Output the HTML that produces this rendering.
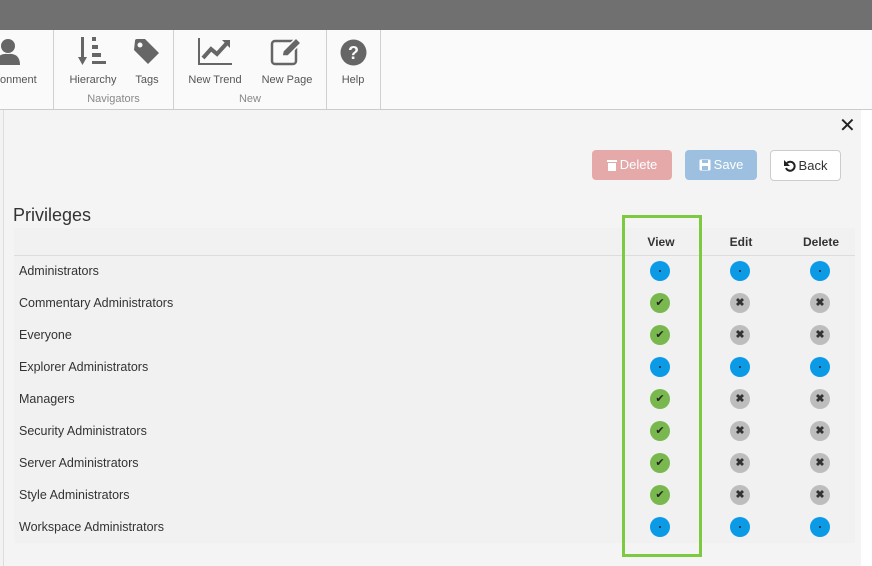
<!DOCTYPE html><html><head><style>
body{margin:0;width:872px;height:566px;overflow:hidden;background:#f3f3f3;font-family:"Liberation Sans",sans-serif;position:relative}
.top{position:absolute;left:0;top:0;width:872px;height:30px;background:#707070}
.tb{position:absolute;left:0;top:30px;width:872px;height:79px;background:#fafafa;border-bottom:1px solid #ccc}
.sep{position:absolute;top:30px;height:79px;width:1px;background:#d0d0d0}
.lbl{position:absolute;font-size:11px;color:#555;text-align:center}
.grp{position:absolute;font-size:11px;color:#888;text-align:center}
.panel{position:absolute;left:3px;top:110px;width:857px;height:456px;background:#f4f4f4;border-left:1px solid #ddd;border-right:1px solid #ddd}
.right{position:absolute;left:861px;top:110px;width:11px;height:456px;background:#fff}
.btn{position:absolute;top:150px;height:30px;border-radius:4px;font-size:13px;line-height:30px;text-align:center;color:#fff}
.btn svg{vertical-align:-2px;margin-right:3px}
h2{position:absolute;left:13px;top:205px;margin:0;font-size:18px;font-weight:normal;color:#333}
.tbl{position:absolute;left:14px;top:228px;width:841px;height:315px;background:#f1f1f1}
.hd{position:absolute;top:235px;font-size:12px;font-weight:bold;color:#333;text-align:center;width:80px}
.row{position:absolute;left:19px;font-size:12.5px;color:#333}
.ic{position:absolute;width:20px;height:20px;border-radius:50%}
.b{background:#0a9ae6}.b::after{content:"";position:absolute;left:9px;top:9px;width:2px;height:2px;background:#222;border-radius:50%}
.g{background:#78b84f;color:#222;font-size:11px;text-align:center;line-height:20px}
.x{background:#bdbdbd;color:#333;font-size:11px;text-align:center;line-height:20px;font-weight:bold}
.box{position:absolute;left:622px;top:215px;width:74px;height:336px;border:3px solid #7dc93f}
</style></head><body>
<div class="top"></div><div class="tb"></div>
<div class="sep" style="left:53px"></div><div class="sep" style="left:173px"></div><div class="sep" style="left:326px"></div><div class="sep" style="left:380px"></div>
<svg style="position:absolute;left:0;top:38px" width="20" height="28"><circle cx="8" cy="8" r="7" fill="#666"/><path d="M-4 27 Q-4 15 8 16 Q20 15 20 27Z" fill="#666"/></svg>
<div class="lbl" style="left:0;top:74px">onment</div>
<svg style="position:absolute;left:78px;top:37px" width="32" height="30" fill="#666"><rect x="3" y="0" width="3" height="22"/><path d="M0 20h9l-4.5 8z"/><rect x="14" y="0" width="4" height="4"/><rect x="14" y="8" width="6" height="4"/><rect x="14" y="16" width="9" height="4"/><rect x="14" y="24" width="14" height="3"/></svg>
<div class="lbl" style="left:64px;top:74px;width:58px">Hierarchy</div>
<svg style="position:absolute;left:133px;top:38px" width="28" height="28"><path d="M2 3 Q2 1 4 1 H12 L26 15 L15 26 L1 12Z" fill="#666"/><circle cx="7" cy="7" r="2.5" fill="#fafafa"/></svg>
<div class="lbl" style="left:132px;top:74px;width:30px">Tags</div>
<div class="grp" style="left:54px;top:93px;width:119px">Navigators</div>
<svg style="position:absolute;left:198px;top:38px" width="36" height="28"><path d="M1 0V26H34" stroke="#666" stroke-width="2" fill="none"/><path d="M5 20L13 11L19 16L29 5" stroke="#666" stroke-width="4" fill="none"/><path d="M24 2H32V10Z" fill="#666"/></svg>
<div class="lbl" style="left:185px;top:74px;width:60px">New Trend</div>
<svg style="position:absolute;left:270px;top:38px" width="32" height="28"><rect x="2" y="3" width="24" height="23" rx="3" stroke="#666" stroke-width="2.5" fill="none"/><path d="M12 18L13 13L26 0L31 5L18 18Z" fill="#666" stroke="#fafafa" stroke-width="1.5"/></svg>
<div class="lbl" style="left:257px;top:74px;width:60px">New Page</div>
<div class="grp" style="left:174px;top:93px;width:152px">New</div>
<svg style="position:absolute;left:340px;top:39px" width="27" height="27"><circle cx="13.5" cy="13.5" r="13" fill="#666"/><text x="13.5" y="20" text-anchor="middle" font-family="Liberation Sans" font-weight="bold" font-size="18" fill="#fafafa">?</text></svg>
<div class="lbl" style="left:336px;top:74px;width:34px">Help</div>
<div class="panel"></div><div class="right"></div>
<div style="position:absolute;left:839px;top:113px;font-size:20px;color:#222">✕</div>
<div class="btn" style="left:592px;width:80px;background:#e5a9a9"><svg width="10" height="12" fill="#fff"><rect x="0" y="1" width="10" height="2"/><rect x="1" y="4" width="8" height="8"/></svg>Delete</div>
<div class="btn" style="left:685px;width:72px;background:#9dc0e0"><svg width="12" height="12"><rect x="0.5" y="0.5" width="11" height="11" rx="1" fill="#fff"/><rect x="3" y="1" width="6" height="3" fill="#9dc0e0"/><rect x="3" y="7" width="6" height="4" fill="#9dc0e0"/></svg>Save</div>
<div class="btn" style="left:770px;width:69px;background:#fff;border:1px solid #ccc;color:#333;height:29px;line-height:29px"><svg width="12" height="12"><path d="M3 3A4.5 4.5 0 1 1 2 8" stroke="#222" stroke-width="2" fill="none"/><path d="M0 0V6H6Z" fill="#222"/></svg>Back</div>
<h2>Privileges</h2>
<div class="tbl"></div>
<div style="position:absolute;left:14px;top:255px;width:841px;height:1px;background:#ddd"></div>
<div class="hd" style="left:621px">View</div><div class="hd" style="left:701px">Edit</div><div class="hd" style="left:781px">Delete</div>
<div class="row" style="top:264px">Administrators</div>
<div class="row" style="top:296px">Commentary Administrators</div>
<div class="row" style="top:328px">Everyone</div>
<div class="row" style="top:360px">Explorer Administrators</div>
<div class="row" style="top:392px">Managers</div>
<div class="row" style="top:424px">Security Administrators</div>
<div class="row" style="top:456px">Server Administrators</div>
<div class="row" style="top:488px">Style Administrators</div>
<div class="row" style="top:520px">Workspace Administrators</div>
<div class="ic b" style="left:650px;top:261px"></div><div class="ic b" style="left:730px;top:261px"></div><div class="ic b" style="left:810px;top:261px"></div>
<div class="ic g" style="left:650px;top:293px">✔</div><div class="ic x" style="left:730px;top:293px">✖</div><div class="ic x" style="left:810px;top:293px">✖</div>
<div class="ic g" style="left:650px;top:325px">✔</div><div class="ic x" style="left:730px;top:325px">✖</div><div class="ic x" style="left:810px;top:325px">✖</div>
<div class="ic b" style="left:650px;top:357px"></div><div class="ic b" style="left:730px;top:357px"></div><div class="ic b" style="left:810px;top:357px"></div>
<div class="ic g" style="left:650px;top:389px">✔</div><div class="ic x" style="left:730px;top:389px">✖</div><div class="ic x" style="left:810px;top:389px">✖</div>
<div class="ic g" style="left:650px;top:421px">✔</div><div class="ic x" style="left:730px;top:421px">✖</div><div class="ic x" style="left:810px;top:421px">✖</div>
<div class="ic g" style="left:650px;top:453px">✔</div><div class="ic x" style="left:730px;top:453px">✖</div><div class="ic x" style="left:810px;top:453px">✖</div>
<div class="ic g" style="left:650px;top:485px">✔</div><div class="ic x" style="left:730px;top:485px">✖</div><div class="ic x" style="left:810px;top:485px">✖</div>
<div class="ic b" style="left:650px;top:517px"></div><div class="ic b" style="left:730px;top:517px"></div><div class="ic b" style="left:810px;top:517px"></div>
<div class="box"></div>
</body></html>
